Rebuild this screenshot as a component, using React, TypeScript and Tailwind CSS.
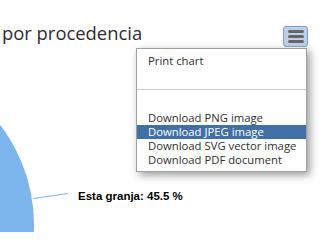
import React from "react";

const items = [
  { label: "Download PNG image", active: false },
  { label: "Download JPEG image", active: true },
  { label: "Download SVG vector image", active: false },
  { label: "Download PDF document", active: false },
];

export default function App() {
  return (
    <div
      className="relative w-[329px] h-[232px] overflow-hidden bg-white"
      style={{ fontFamily: '"Open Sans", "Noto Sans", sans-serif' }}
    >
      <svg
        className="absolute left-0 top-0"
        width="329"
        height="232"
        viewBox="0 0 329 232"
      >
        <circle cx="-131" cy="225" r="165" fill="#7cb5ec" />
        <path d="M33 198.5 L68 193.5" stroke="#7cb5ec" strokeWidth="1" fill="none" />
      </svg>

      <div
        className="absolute left-[78px] top-[188px] text-[11.5px] font-bold leading-[16px] text-black whitespace-nowrap"
        style={{ fontFamily: '"Liberation Sans", Arial, sans-serif' }}
      >
        Esta granja: 45.5 %
      </div>

      <div className="relative flex items-start pl-[2px] pt-[21px]">
        <div className="text-[18.4px] leading-[24px] text-[#2f2a35] whitespace-nowrap">
          por procedencia
        </div>
        <div className="ml-auto mr-[21px] mt-[5px] flex h-[21px] w-[25px] flex-col items-center justify-center gap-[2px] rounded-[3px] border border-[#7f9cc4] bg-[#bcd0ea]">
          <div className="h-[3px] w-[16px] rounded-full bg-[#666666]" />
          <div className="h-[3px] w-[16px] rounded-full bg-[#666666]" />
          <div className="h-[3px] w-[16px] rounded-full bg-[#666666]" />
        </div>
      </div>

      <div className="absolute left-[136px] top-[48px] w-[171px] border border-[#a0a0a0] bg-white pt-[5px] pb-[4px] shadow-[3px_3px_8px_#999999] text-[11.3px] leading-[14px] text-[#303030]">
        <div className="h-[14px] pl-[11px] whitespace-nowrap">Print chart</div>
        <div className="h-[21px]" />
        <div className="h-px bg-[#cccccc]" />
        <div className="h-[21px]" />
        {items.map((it) => (
          <div
            key={it.label}
            className={
              it.active
                ? "h-[14px] pl-[11px] whitespace-nowrap bg-[#4270a6] text-white"
                : "h-[14px] pl-[11px] whitespace-nowrap"
            }
          >
            {it.label}
          </div>
        ))}
      </div>
    </div>
  );
}
